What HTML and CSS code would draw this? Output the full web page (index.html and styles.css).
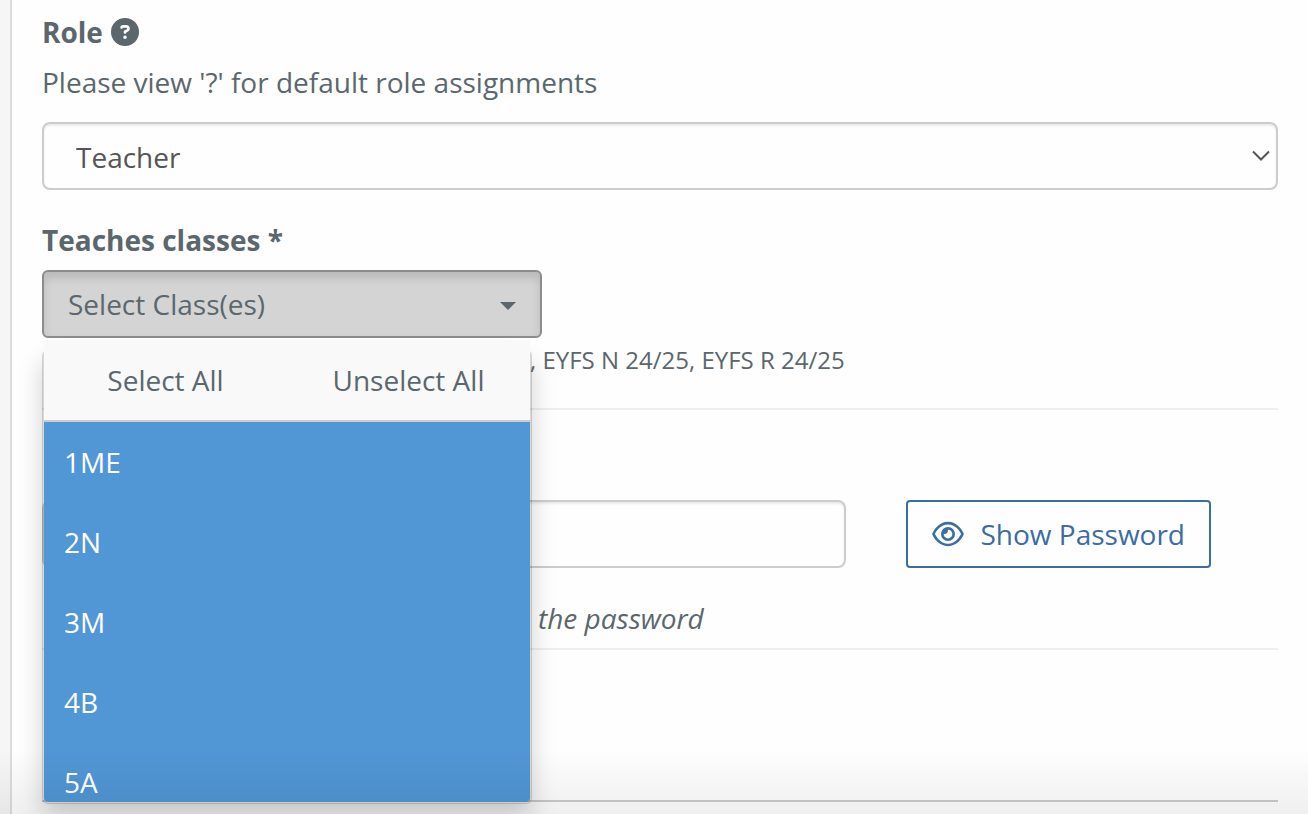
FILE: index.html
```
<!DOCTYPE html>
<html lang="en">
<head>
    <meta charset="UTF-8">
    <meta name="viewport" content="width=device-width, initial-scale=1.0">
    <title>Edit user</title>
    <link rel="stylesheet" href="styles.css">
</head>
<body>
    <main class="panel">
        <form class="user-form">
            <div class="label-row">
                <label class="form-label" for="role">Role</label>
                <button type="button" class="help-btn" aria-label="Help">
                    <svg viewBox="0 0 512 512" width="28" height="28">
                        <path fill="currentColor" fill-rule="evenodd" d="M256 512A256 256 0 1 0 256 0a256 256 0 1 0 0 512zM169.800 165.300c7.900-22.300 29.100-37.300 52.800-37.300l58.300 0c34.900 0 63.100 28.300 63.100 63.100c0 22.600-12.100 43.500-31.700 54.800L280 264.400c-.2 13-10.900 23.600-24 23.600c-13.300 0-24-10.700-24-24l0-13.500c0-8.600 4.600-16.500 12.100-20.800l44.300-25.400c4.700-2.700 7.600-7.700 7.600-13.100c0-8.400-6.800-15.100-15.100-15.100l-58.300 0c-3.400 0-6.400 2.100-7.500 5.300l-.4 1.200c-4.400 12.500-18.200 19-30.600 14.600s-19-18.200-14.600-30.600l.4-1.200zM224 352a32 32 0 1 1 64 0 32 32 0 1 1 -64 0z"/>
                    </svg>
                </button>
            </div>
            <p class="help-text">Please view '?' for default role assignments</p>
            <div class="select-wrap">
                <select id="role" class="form-control role-select">
                    <option selected>Teacher</option>
                </select>
                <svg class="chevron" viewBox="0 0 18 12" width="18" height="12">
                    <path d="M1 1.500l8 8 8-8" fill="none" stroke="#555" stroke-width="2"/>
                </svg>
            </div>

            <label class="form-label classes-label" for="classes">Teaches classes *</label>
            <div class="dropdown">
                <button type="button" id="classes" class="dropdown-toggle" aria-expanded="true">
                    <span>Select Class(es)</span>
                    <span class="caret"></span>
                </button>
                <div class="dropdown-menu">
                    <div class="menu-actions">
                        <button type="button">Select All</button>
                        <button type="button">Unselect All</button>
                    </div>
                    <ul class="class-list">
                        <li><button type="button">1ME</button></li>
                        <li><button type="button">2N</button></li>
                        <li><button type="button">3M</button></li>
                        <li><button type="button">4B</button></li>
                        <li><button type="button">5A</button></li>
                    </ul>
                </div>
            </div>
            <p class="class-summary">, EYFS N 24/25, EYFS R 24/25</p>
            <hr>

            <div class="password-row">
                <input type="password" class="form-control" aria-label="Password">
                <button type="button" class="btn-outline">
                    <svg viewBox="0 0 576 512" width="32" height="28">
                        <path fill="currentColor" fill-rule="evenodd" d="M288 80c-65.200 0-118.800 29.600-159.900 67.700C89.600 183.500 63 226 49.400 256c13.600 30 40.200 72.500 78.600 108.300C169.200 402.400 222.800 432 288 432s118.800-29.600 159.900-67.700C486.400 328.500 513 286 526.600 256c-13.600-30-40.200-72.500-78.600-108.300C406.800 109.600 353.200 80 288 80zM95.400 112.600C142.500 68.800 207.200 32 288 32s145.500 36.800 192.600 80.600c46.800 43.500 78.100 95.400 93 131.100c3.300 7.900 3.300 16.700 0 24.600c-14.900 35.700-46.200 87.700-93 131.100C433.500 443.200 368.800 480 288 480s-145.500-36.800-192.600-80.600C48.600 356 17.300 304 2.400 268.300c-3.300-7.900-3.300-16.700 0-24.600C17.300 208 48.600 156 95.400 112.600zM288 336c44.200 0 80-35.800 80-80s-35.800-80-80-80c-.7 0-1.300 0-2 0c1.300 5.100 2 10.500 2 16c0 35.300-28.700 64-64 64c-5.500 0-10.900-.7-16-2c0 .7 0 1.300 0 2c0 44.200 35.800 80 80 80zm0-208a128 128 0 1 1 0 256 128 128 0 1 1 0-256z"/>
                    </svg>
                    <span>Show Password</span>
                </button>
            </div>
            <p class="password-note">the password</p>
            <hr>
            <hr class="section-end">
        </form>
    </main>
    <div class="bottom-fade"></div>
</body>
</html>
```
FILE: styles.css
```
* {
    box-sizing: border-box;
}
body {
    margin: 0;
    padding-left: 10px;
    height: 100vh;
    overflow: hidden;
    background: #f6f6f6;
    color: #5b676d;
    font-family: "Open Sans", sans-serif;
    font-size: 28px;
    line-height: 40px;
}
button,
input,
select {
    font: inherit;
    color: inherit;
}
button {
    background: none;
    border: none;
    padding: 0;
    cursor: pointer;
}
p {
    margin: 0;
}
.panel {
    min-height: 100vh;
    padding: 12px 30px 0;
    background: #fefefe;
    border-left: 2px solid #ddd;
}
.label-row {
    display: flex;
    align-items: center;
    gap: 8px;
}
.form-label {
    font-weight: bold;
}
.help-btn,
.help-btn svg {
    display: block;
}
.help-text {
    margin: 10px 0 20px;
}
.form-control {
    display: block;
    width: 100%;
    height: 68px;
    padding: 0 32px;
    background: #fefefe;
    border: 2px solid #ccc;
    border-radius: 8px;
    box-shadow: inset 0 2px 2px rgba(0, 0, 0, 0.075);
}
.select-wrap {
    position: relative;
}
.role-select {
    appearance: none;
    padding-top: 2px;
    color: #555;
}
.chevron {
    position: absolute;
    top: 28px;
    right: 8px;
    pointer-events: none;
}
.classes-label {
    display: block;
    margin: 30px 0 10px;
}

/* class picker */
.dropdown {
    position: relative;
    width: 500px;
    max-width: 100%;
}
.dropdown-toggle {
    display: flex;
    align-items: center;
    justify-content: space-between;
    width: 100%;
    height: 68px;
    padding: 0 24px;
    background: #d4d4d4;
    border: 2px solid #8c8c8c;
    border-radius: 6px;
    box-shadow: inset 0 6px 10px rgba(0, 0, 0, 0.125);
}
.caret {
    margin-top: 4px;
    border-top: 8px solid #5b676d;
    border-left: 8px solid transparent;
    border-right: 8px solid transparent;
}
.dropdown-menu {
    position: absolute;
    top: 80px;
    left: 0;
    z-index: 10;
    width: 490px;
    background: #fff;
    background-clip: padding-box;
    border: 2px solid rgba(0, 0, 0, 0.15);
    border-radius: 6px;
    box-shadow: 0 12px 24px rgba(0, 0, 0, 0.175);
}
.menu-actions {
    display: grid;
    grid-template-columns: 1fr 1fr;
    height: 82px;
    margin-top: -12px;
    background: #f9f9f9;
    border-bottom: 2px solid #ccc;
}
.class-list {
    height: 380px;
    margin: 0;
    padding: 0;
    list-style: none;
    overflow: hidden;
    background: #5196d5;
    border-radius: 0 0 4px 4px;
}
.class-list button {
    width: 100%;
    height: 80px;
    padding: 0 20px;
    color: #fff;
    text-align: left;
}
.class-summary {
    padding: 2px 0 0 488px;
    font-size: 24px;
}
hr {
    margin: 28px 0 0;
    border: 0;
    border-top: 2px solid #eee;
}

.password-row {
    display: flex;
    align-items: center;
    gap: 60px;
    margin-top: 90px;
    padding-right: 67px;
}
.password-row .form-control {
    flex: 1;
    min-width: 0;
}
.btn-outline {
    display: flex;
    align-items: center;
    gap: 16px;
    height: 68px;
    padding: 0 24px;
    color: #3b6ca3;
    border: 2px solid #3b6ca3;
    border-radius: 4px;
}
.password-note {
    padding: 30px 0 0 496px;
    font-style: italic;
}
.password-note + hr {
    margin-top: 10px;
}
.section-end {
    margin-top: 150px;
    border-color: #ccc;
}
.bottom-fade {
    position: fixed;
    inset: auto 0 0;
    z-index: 20;
    height: 64px;
    background: linear-gradient(transparent, rgba(0, 0, 0, 0.06));
    pointer-events: none;
}
```
